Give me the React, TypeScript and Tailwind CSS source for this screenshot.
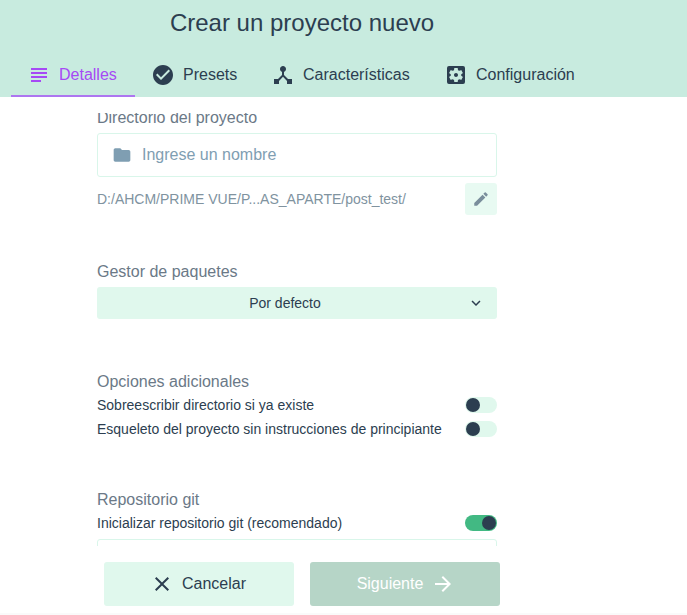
import type { ReactNode } from "react";
import {
  MdArrowForward,
  MdCheckCircle,
  MdClose,
  MdDeviceHub,
  MdEdit,
  MdFolder,
  MdKeyboardArrowDown,
  MdSettingsApplications,
  MdSubject,
} from "react-icons/md";

function Tab({ icon, label, width }: { icon: ReactNode; label: string; width: string }) {
  return (
    <button className={`flex h-11 items-center gap-2 pl-4 ${width}`}>
      {icon}
      <span className="whitespace-nowrap">{label}</span>
    </button>
  );
}

function Label({ children }: { children: ReactNode }) {
  return <div className="h-8 pt-[5px] leading-6 text-[#6b7987]">{children}</div>;
}

function SwitchRow({ label, on = false }: { label: string; on?: boolean }) {
  return (
    <div className="flex h-6 items-center justify-between text-sm">
      <span>{label}</span>
      <span
        className={`flex h-4 w-8 items-center rounded-full px-px ${
          on ? "justify-end bg-[#42b983]" : "bg-[#e0f8ed]"
        }`}
      >
        <span className="size-3.5 rounded-full bg-[#2c3e50]" />
      </span>
    </div>
  );
}

export default function App() {
  return (
    <div className="flex h-[615px] w-[687px] flex-col overflow-hidden bg-white font-['Liberation_Sans',Arial,sans-serif] text-base text-[#2c3e50]">
      <header className="h-[97px] shrink-0 bg-[#c8ebdf]">
        <h1 className="h-[53px] w-[604px] pt-[7px] text-center text-2xl leading-8">
          Crear un proyecto nuevo
        </h1>
        <nav className="flex pl-[11px]">
          <Tab
            icon={<MdSubject className="size-6" />}
            label="Detalles"
            width="w-[124px] pt-0.5 text-[#a649f5] border-b-2 border-[#ad76f0]"
          />
          <Tab icon={<MdCheckCircle className="size-6" />} label="Presets" width="w-[120px]" />
          <Tab icon={<MdDeviceHub className="size-6" />} label="Características" width="w-[173px]" />
          <Tab icon={<MdSettingsApplications className="size-6" />} label="Configuración" width="w-[163px]" />
        </nav>
      </header>

      <main className="mt-4 ml-[97px] h-[433px] w-[400px] shrink-0 overflow-hidden">
        <section className="-mt-3 h-[154px]">
          <Label>Directorio del proyecto</Label>
          <div className="flex h-11 items-center gap-2.5 rounded-[3px] border border-[#d9f6ea] pl-3.5 text-[#7f9eb2]">
            <MdFolder className="size-5" />
            <span>Ingrese un nombre</span>
          </div>
          <div className="mt-1.5 flex h-8 items-center justify-between text-sm text-[#80939f]">
            <span>D:/AHCM/PRIME VUE/P...AS_APARTE/post_test/</span>
            <button className="grid size-8 place-items-center rounded-[3px] bg-[#e8faf2] text-[#7a8e9c]">
              <MdEdit className="size-[18px]" />
            </button>
          </div>
        </section>

        <section className="h-[110px]">
          <Label>Gestor de paquetes</Label>
          <button className="flex h-8 w-full items-center rounded-[3px] bg-[#e0f8ed] pr-3 text-sm">
            <span className="flex-1 pr-px pl-[7px] text-center">Por defecto</span>
            <MdKeyboardArrowDown className="size-[18px]" />
          </button>
        </section>

        <section className="h-[118px]">
          <Label>Opciones adicionales</Label>
          <div className="-mt-1">
            <SwitchRow label="Sobreescribir directorio si ya existe" />
            <SwitchRow label="Esqueleto del proyecto sin instrucciones de principiante" />
          </div>
        </section>

        <section>
          <Label>Repositorio git</Label>
          <div className="-mt-1">
            <SwitchRow label="Inicializar repositorio git (recomendado)" on />
          </div>
          <div className="mt-1 h-11 rounded-[3px] border border-[#d9f6ea]" />
        </section>
      </main>

      <footer className="flex h-[67px] shrink-0 gap-4 pt-4 pl-[104px]">
        <button className="flex h-11 w-[190px] items-center justify-center gap-2 rounded-[3px] bg-[#e0f8ed] pr-0.5">
          <MdClose className="size-6" />
          <span>Cancelar</span>
        </button>
        <button className="flex h-11 w-[190px] items-center justify-center gap-2 rounded-[3px] bg-[#b6d5c7] pl-0.5 text-white">
          <span>Siguiente</span>
          <MdArrowForward className="size-6" />
        </button>
      </footer>
      <div className="h-0.5 shrink-0 bg-[#fafafa]" />
    </div>
  );
}
